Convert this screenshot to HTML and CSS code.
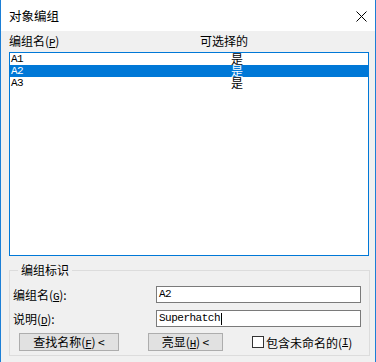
FILE: index.html
```
<html>
<head>
	<meta charset="utf-8">
	<title>对象编组</title>
	<link rel="stylesheet" href="styles.css">
</head>
<body>

	<div class="win">

		<div class="titlebar">
			<span class="title">对象编组</span>
			<svg class="close" width="11" height="11" viewBox="0 0 11 11">
				<path d="M0.5 0.5 L10.5 10.5 M10.5 0.5 L0.5 10.5" stroke="#000" stroke-width="1" fill="none"/>
			</svg>
		</div>

		<div class="content">

			<div class="head">
				<span class="hname">编组名(<u class="m">P</u>)</span>
				<span class="hsel">可选择的</span>
			</div>

			<div class="list">
				<div class="row"><span class="name m">A1</span><span class="sel">是</span></div>
				<div class="row active"><span class="name m">A2</span><span class="sel">是</span></div>
				<div class="row"><span class="name m">A3</span><span class="sel">是</span></div>
			</div>

			<fieldset class="group">
				<legend>编组标识</legend>

				<div class="field">
					<label>编组名(<u class="m">G</u>):</label>
					<div class="input m">A2</div>
				</div>

				<div class="field">
					<label>说明(<u class="m">D</u>):</label>
					<div class="input m">Superhatch<span class="caret"></span></div>
				</div>

				<div class="buttons">
					<div class="btn b1">查找名称(<u class="m">F</u>) &lt;</div>
					<div class="btn b2">亮显(<u class="m">H</u>) &lt;</div>
					<div class="check"><span class="box"></span>包含未命名的(<u class="m">I</u>)</div>
				</div>
			</fieldset>

		</div>

	</div>

</body>
</html>
```

FILE: styles.css
```
* {
	margin: 0;
	padding: 0;
	box-sizing: border-box;
}

body {
	font: 12px "Noto Sans CJK SC", sans-serif;
	color: #000;
	background: #f0f0f0;
}

.m {
	font-family: "Liberation Mono", monospace;
	font-size: 11px;
	letter-spacing: -0.5px;
}

u.m {
	text-decoration: underline;
}


.win {
	width: 376px;
	height: 362px;
	border-left: 1px solid #1c7fd6;
	border-right: 1px solid #1c7fd6;
	background: #f0f0f0;
	overflow: hidden;
}


.titlebar {
	height: 31px;
	background: #fff;
	display: flex;
	align-items: center;
	justify-content: space-between;
	padding: 1px 8px 0 8px;
}

.title {
	font-size: 12.5px;
	line-height: 16px;
}


.content {
	padding: 0 6px 0 8px;
}

.head {
	height: 21px;
	display: flex;
	line-height: 16px;
	padding-top: 2px;
}

.hname {
	width: 191px;
}


.list {
	height: 204px;
	border: 1px solid #0078d7;
	background: #fff;
}

.row {
	height: 12px;
	line-height: 12px;
	display: grid;
	grid-template-columns: 221px 12px;
}

.row .name {
	padding-left: 1px;
}

.row .sel {
	font-size: 12px;
}

.row.active {
	background: #0078d7;
	color: #fff;
}


.group {
	margin-top: 6px;
	border: 1px solid #dcdcdc;
	padding: 8px 8px 4px 3px;
	width: 361px;
}

.group legend {
	margin-left: 5px;
	padding: 0 3px;
	line-height: 16px;
}

.field {
	display: grid;
	grid-template-columns: 143px 1fr;
	align-items: center;
	margin-bottom: 7px;
}

.field + .field {
	margin-bottom: 6px;
}

.input {
	height: 17px;
	border: 1px solid #7a7a7a;
	background: #fff;
	padding-left: 2px;
	line-height: 15px;
	display: flex;
	align-items: center;
}

.caret {
	width: 1px;
	height: 12px;
	background: #000;
	margin-left: 1px;
}


.buttons {
	display: flex;
	align-items: center;
	height: 18px;
}

.btn {
	height: 18px;
	border: 1px solid #adadad;
	background: #e1e1e1;
	text-align: center;
	line-height: 16px;
}

.b1 {
	width: 100px;
	margin-left: 6px;
}

.b2 {
	width: 75px;
	margin-left: 29px;
}

.check {
	display: flex;
	align-items: center;
	margin-left: 29px;
}

.box {
	width: 12px;
	height: 12px;
	border: 1px solid #333;
	background: #fff;
	margin-right: 2px;
}
```
